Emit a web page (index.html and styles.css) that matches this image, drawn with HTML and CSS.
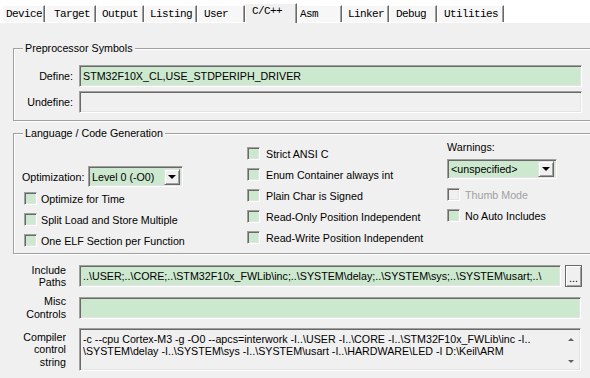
FILE: index.html
```html
<!DOCTYPE html>
<html lang="en">
<head>
    <meta charset="UTF-8">
    <meta name="viewport" content="width=device-width, initial-scale=1.0">
    <title>Options for Target - C/C++</title>
    <link rel="stylesheet" href="styles.css">
</head>
<body>
    <div class="tabs">
        <div class="tab tab-device">Device</div>
        <div class="tab tab-target">Target</div>
        <div class="tab tab-output">Output</div>
        <div class="tab tab-listing">Listing</div>
        <div class="tab tab-user">User</div>
        <div class="tab tab-cpp selected">C/C++</div>
        <div class="tab tab-asm">Asm</div>
        <div class="tab tab-linker">Linker</div>
        <div class="tab tab-debug">Debug</div>
        <div class="tab tab-utilities">Utilities</div>
    </div>

    <div class="page">
        <fieldset class="group group-pre">
            <legend>Preprocessor Symbols</legend>
            <div class="sym-grid">
                <label class="field-label">Define:</label>
                <div class="edit green">STM32F10X_CL,USE_STDPERIPH_DRIVER</div>
                <label class="field-label">Undefine:</label>
                <div class="edit"></div>
            </div>
        </fieldset>

        <fieldset class="group group-lang">
            <legend>Language / Code Generation</legend>
            <div class="lang-grid">
                <div class="col col-opt">
                    <div class="opt-row">
                        <span class="opt-label">Optimization:</span>
                        <div class="combo combo-level">
                            <span class="combo-text">Level 0 (-O0)</span>
                            <span class="drop"></span>
                        </div>
                    </div>
                    <label class="check"><span class="box"></span>Optimize for Time</label>
                    <label class="check"><span class="box"></span>Split Load and Store Multiple</label>
                    <label class="check"><span class="box"></span>One ELF Section per Function</label>
                </div>
                <div class="col col-mid">
                    <label class="check"><span class="box"></span>Strict ANSI C</label>
                    <label class="check"><span class="box"></span>Enum Container always int</label>
                    <label class="check"><span class="box"></span>Plain Char is Signed</label>
                    <label class="check"><span class="box"></span>Read-Only Position Independent</label>
                    <label class="check"><span class="box"></span>Read-Write Position Independent</label>
                </div>
                <div class="col col-warn">
                    <span class="warn-label">Warnings:</span>
                    <div class="combo combo-warn">
                        <span class="combo-text">&lt;unspecified&gt;</span>
                        <span class="drop"></span>
                    </div>
                    <label class="check disabled"><span class="box"></span>Thumb Mode</label>
                    <label class="check"><span class="box"></span>No Auto Includes</label>
                </div>
            </div>
        </fieldset>

        <div class="paths">
            <label class="field-label multi">Include<br>Paths</label>
            <div class="path-row">
                <div class="edit green path-edit">..\USER;..\CORE;..\STM32F10x_FWLib\inc;..\SYSTEM\delay;..\SYSTEM\sys;..\SYSTEM\usart;..\</div>
                <button class="browse">...</button>
            </div>

            <label class="field-label multi">Misc<br>Controls</label>
            <div class="edit green wide"></div>

            <label class="field-label multi">Compiler<br>control<br>string</label>
            <div class="edit wide memo">
                <div class="memo-text">-c --cpu Cortex-M3 -g -O0 --apcs=interwork -I..\USER -I..\CORE -I..\STM32F10x_FWLib\inc -I..<br>\SYSTEM\delay -I..\SYSTEM\sys -I..\SYSTEM\usart -I..\HARDWARE\LED -I D:\Keil\ARM</div>
                <div class="scroll">
                    <span class="arrow up"></span>
                    <span class="arrow down"></span>
                </div>
            </div>
        </div>
    </div>
</body>
</html>
```

FILE: styles.css
```css
* {
    margin: 0;
    padding: 0;
    box-sizing: border-box;
}

body {
    width: 590px;
    height: 378px;
    overflow: hidden;
    background: #f0f0f0;
    font-family: 'Liberation Sans', Arial, sans-serif;
    font-size: 10.7px;
    color: #000;
}

/* tab strip */
.tabs {
    display: flex;
    align-items: flex-end;
    height: 22px;
    padding-left: 2px;
    background: #fff;
}

.tab {
    height: 17px;
    line-height: 16px;
    padding-left: 5px;
    font-family: 'Liberation Mono', 'DejaVu Sans Mono', monospace;
    font-size: 11px;
    letter-spacing: -0.6px;
    background: #f7f7f7;
    border-top: 1px solid #fff;
    border-left: 1px solid #fff;
    border-right: 1px solid #696969;
    box-shadow: inset -1px 0 #a0a0a0;
    white-space: nowrap;
}

.tab-device { width: 43px; padding-left: 3px; }
.tab-target { width: 51px; padding-left: 8px; }
.tab-output { width: 48px; }
.tab-listing { width: 53px; }
.tab-user { width: 48px; padding-left: 6px; }
.tab-asm { width: 45px; padding-left: 2px; }
.tab-linker { width: 47px; }
.tab-debug { width: 48px; padding-left: 6px; }
.tab-utilities { width: 67px; padding-left: 6px; }

.tab.selected {
    width: 52px;
    height: 20px;
    margin-bottom: -1px;
    padding-left: 6px;
    line-height: 15px;
    background: #f0f0f0;
    position: relative;
    z-index: 1;
}

/* dialog page */
.page {
    border-top: 1px solid #fff;
    padding-left: 13px;
}

.group {
    width: 600px;
    border: 1px solid #a0a0a0;
    box-shadow: inset 1px 1px #fff, 1px 1px #fff;
    min-inline-size: 0;
}

.group legend {
    margin-left: 9px;
    padding: 0 2px;
    line-height: 13px;
    background: #f0f0f0;
}

.group-pre {
    margin-top: 19px;
    padding: 10px 0 7px;
}

.group-lang {
    margin-top: 6px;
    padding: 3px 0 2px;
}

.sym-grid {
    display: grid;
    grid-template-columns: 59px 503px;
    grid-auto-rows: 22px;
    column-gap: 6px;
    row-gap: 4px;
    align-items: center;
}

.field-label {
    text-align: right;
}

.field-label.multi {
    line-height: 12.5px;
}

.edit {
    height: 22px;
    padding: 0 3px;
    line-height: 20px;
    white-space: nowrap;
    overflow: hidden;
    border: 1px solid;
    border-color: #a0a0a0 #fff #fff #a0a0a0;
    box-shadow: inset 1px 1px #696969, inset -1px -1px #e3e3e3;
    background: #f0f0f0;
}

.green {
    background: #cce8cf;
}

/* language / code generation */
.lang-grid {
    display: grid;
    grid-template-columns: 225px 200px 140px;
    padding-left: 8px;
}

.col {
    display: flex;
    flex-direction: column;
}

.opt-row {
    display: flex;
    align-items: center;
    height: 21px;
    margin-top: 23px;
}

.opt-label {
    width: 66px;
}

.combo {
    display: flex;
    align-items: center;
    padding: 0 2px 0 3px;
    border: 1px solid;
    border-color: #a0a0a0 #fff #fff #a0a0a0;
    box-shadow: inset 1px 1px #696969, inset -1px -1px #e3e3e3;
    background: #cce8cf;
}

.combo-level {
    width: 95px;
    height: 21px;
}

.combo-warn {
    width: 110px;
    height: 20px;
    margin-top: 5px;
}

.combo-text {
    flex: 1;
    white-space: nowrap;
}

.drop {
    width: 16px;
    height: 16px;
    display: flex;
    align-items: center;
    justify-content: center;
    background: #f0f0f0;
    border: 1px solid;
    border-color: #e3e3e3 #696969 #696969 #e3e3e3;
    box-shadow: inset 1px 1px #fff, inset -1px -1px #a0a0a0;
}

.drop::after {
    content: "";
    border-left: 4px solid transparent;
    border-right: 4px solid transparent;
    border-top: 4px solid #000;
}

.col-opt .opt-row + .check {
    margin-top: 1px;
}

.check {
    display: flex;
    align-items: center;
    gap: 5px;
    height: 21px;
    white-space: nowrap;
}

.col-opt .check {
    padding-left: 2px;
    gap: 4px;
}

.col-mid .check {
    gap: 6px;
}

.box {
    width: 13px;
    height: 13px;
    flex: none;
    border: 1px solid;
    border-color: #a0a0a0 #fff #fff #a0a0a0;
    box-shadow: inset 1px 1px #696969, inset -1px -1px #e3e3e3;
    background: #cce8cf;
}

.check.disabled {
    color: #a0a0a0;
}

.check.disabled .box {
    background: #f0f0f0;
}

.warn-label {
    margin-top: -2px;
    line-height: 13px;
}

.col-warn .combo-warn + .check {
    margin-top: 5px;
}

/* include / misc / compiler rows */
.paths {
    display: grid;
    grid-template-columns: 53px 503px;
    grid-template-rows: 22px 21px 43px;
    column-gap: 13px;
    row-gap: 10px;
    align-items: center;
    margin-top: 11px;
}

.path-row {
    display: flex;
    align-items: center;
    gap: 4px;
}

.path-edit {
    width: 482px;
}

.browse {
    width: 17px;
    height: 22px;
    font-family: 'Liberation Sans', Arial, sans-serif;
    font-size: 11px;
    line-height: 14px;
    padding-top: 4px;
    color: #000;
    background: #f0f0f0;
    border: 1px solid #696969;
    box-shadow: inset 1px 1px #fff, inset -1px -1px #a0a0a0;
}

.wide {
    width: 502px;
}

.edit.memo {
    height: 43px;
    display: flex;
    padding: 4px 0 0 3px;
    line-height: 12px;
}

.memo-text {
    flex: 1;
    overflow: hidden;
}

.scroll {
    width: 17px;
    margin: -3px 1px 1px 0;
    display: flex;
    flex-direction: column;
    justify-content: space-between;
    align-items: center;
    padding: 8px 0 6px;
    background: #f0f0f0;
}

.arrow {
    border-left: 3px solid transparent;
    border-right: 3px solid transparent;
}

.arrow.up {
    border-bottom: 3px solid #606060;
}

.arrow.down {
    border-top: 3px solid #606060;
}
```
